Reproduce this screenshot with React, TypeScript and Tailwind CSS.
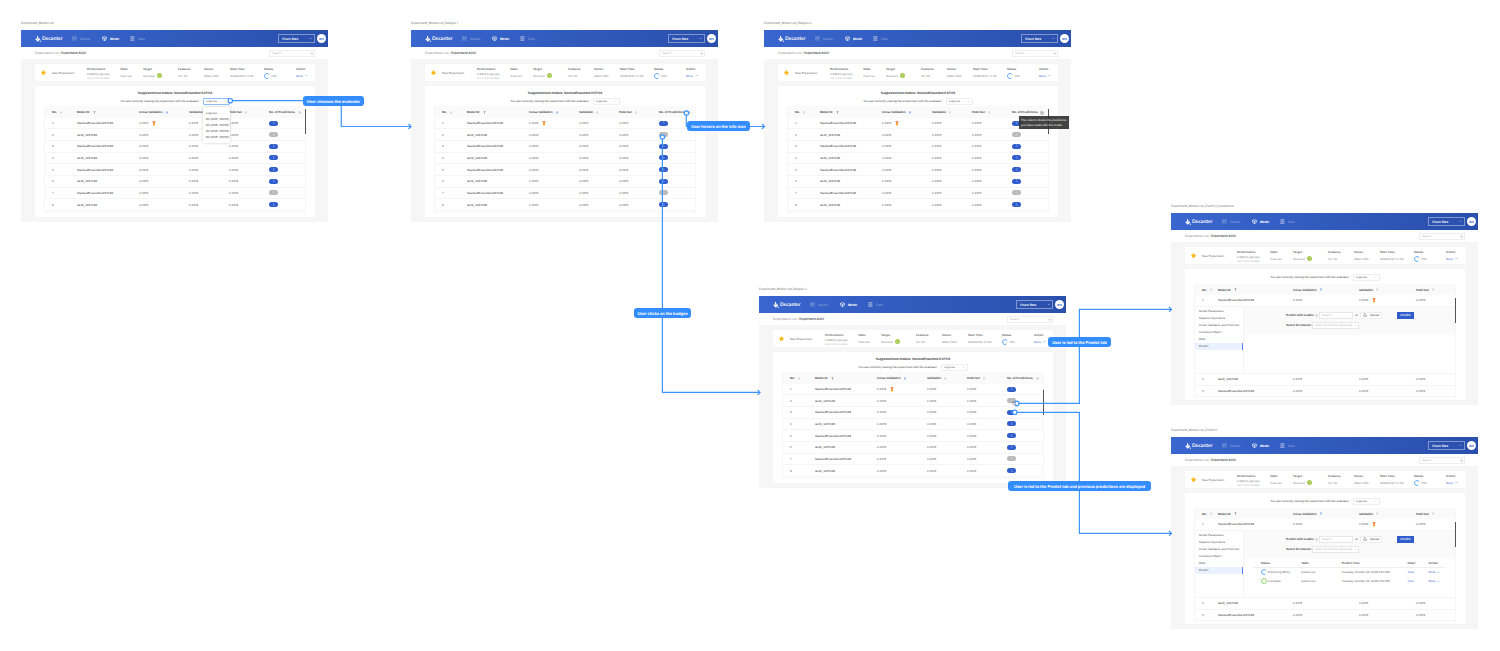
import React, { useId } from "react";
import { Box, ChevronDown, Info, Search, Upload } from "lucide-react";

const ROWS = [1, 2, 3, 4, 5, 6, 7, 8];
const modelName = (n: number) => (n % 2 === 1 ? "StackedEnsemble1237128" : "GLM_1237128");

function Logo() {
  return (
    <svg viewBox="0 0 24 24" className="h-[6px] w-[6px]" fill="none" aria-hidden="true">
      <path d="M8 0h4v5l9 8-9.500 10L1 13l7-6z" fill="#fff" />
      <path d="M5 11.500c4-2 7 2 11-.5" stroke="#3560c6" strokeWidth="1.800" />
      <circle cx="21.500" cy="20.500" r="2.500" fill="#fff" />
    </svg>
  );
}

function BuilderIcon() {
  return (
    <svg viewBox="0 0 20 20" className="h-[5px] w-[5px]" fill="none" stroke="currentColor" strokeWidth="2" aria-hidden="true">
      <path d="M2 19V7h5v12M7 12l5-6M12 19V5h5v14" />
      <circle cx="4.500" cy="4" r="2" />
      <circle cx="14.500" cy="2.500" r="1.800" />
    </svg>
  );
}

function DataIcon() {
  return (
    <svg viewBox="0 0 20 20" className="h-[5px] w-[5px]" fill="currentColor" aria-hidden="true">
      <rect x="1" y="0" width="17" height="6" rx="2" />
      <rect x="1" y="7" width="17" height="6" rx="2" />
      <rect x="1" y="14" width="17" height="6" rx="2" />
    </svg>
  );
}

function SortMark({ tone }: { tone: string }) {
  return (
    <svg viewBox="0 0 6 8" className={`h-[3px] w-[2px] ${tone}`} aria-hidden="true">
      <path d="M0 3.500 3 0l3 3.500H4V8H2V3.500z" fill="currentColor" />
    </svg>
  );
}

function FilterMark() {
  return (
    <svg viewBox="0 0 8 8" className="h-[3px] w-[3px] text-[#aaa]" aria-hidden="true">
      <path d="M1 0h6L5 4v4H3V4z" fill="currentColor" />
    </svg>
  );
}

function Medal() {
  return (
    <svg viewBox="0 0 12 16" className="h-[5px] w-[4px]" aria-hidden="true">
      <path d="M1 0h10L8.500 9h-5z" fill="#e8694c" />
      <path d="M4.500 0h3v8h-3z" fill="#f9c66a" />
      <circle cx="6" cy="11.500" r="3.500" fill="#f5a623" />
    </svg>
  );
}

function Star() {
  return (
    <svg viewBox="0 0 24 24" className="h-[5px] w-[5px]" aria-hidden="true">
      <path
        d="M12 1l3.800 6.800 7.600 1.500-5.200 5.700 1 7.700L12 19.500l-7.200 3.200 1-7.700L.6 9.300l7.600-1.500z"
        fill="#fbb713"
        stroke="#fbb713"
        strokeWidth="1.500"
      />
    </svg>
  );
}

function Ring({ done = false }: { done?: boolean }) {
  return (
    <svg viewBox="0 0 24 24" className="h-[6px] w-[6px] shrink-0" fill="none" aria-hidden="true">
      {done ? (
        <circle cx="12" cy="12" r="10" stroke="#86d35a" strokeWidth="3.500" />
      ) : (
        <>
          <circle cx="12" cy="12" r="10" stroke="#e3f0ff" strokeWidth="3" />
          <path d="M16 21.200A10 10 0 1 1 20 6" stroke="#4a9cf8" strokeWidth="3.500" />
        </>
      )}
    </svg>
  );
}

function Hand() {
  return (
    <svg viewBox="0 0 16 16" className="h-[4px] w-[4px]" aria-hidden="true">
      <path
        d="M4 1h2.500v6l6.500 1.500V12l-2 3.500H6L1.500 9 3 8l1 1.500z"
        fill="#fff"
        stroke="#555"
        strokeWidth="1.500"
      />
    </svg>
  );
}

function More() {
  return (
    <a href="#more" className="flex items-center gap-[2px] text-[#3a68d8]">
      More <ChevronDown className="h-[3px] w-[3px]" strokeWidth={3} />
    </a>
  );
}

function TopBar() {
  return (
    <header className="flex h-[17px] items-center bg-linear-to-r from-[#3966cf] to-[#2a4fac] pr-[2px] pl-[14px] text-white">
      <a href="#home" className="flex w-[37px] items-center gap-px font-[Lato] text-[5px] leading-[6px] font-bold">
        <Logo />
        Decanter
      </a>
      <nav className="flex flex-1 font-[Inter] text-[3px] leading-[4px] font-medium">
        <a href="#builder" className="flex w-[30px] items-center gap-[3px] text-white/40">
          <BuilderIcon />
          Builder
        </a>
        <a href="#model" className="flex w-[28px] items-center gap-[3px] font-bold">
          <Box className="h-[5px] w-[5px]" strokeWidth={3} />
          Model
        </a>
        <a href="#data" className="flex items-center gap-[3px] text-white/40">
          <DataIcon />
          Data
        </a>
      </nav>
      <div className="relative">
        <select
          aria-label="Project"
          className="block h-[9px] w-[37px] appearance-none border border-white/40 pl-[3px] font-[Inter] text-[3px] leading-[4px] font-semibold [text-rendering:inherit]"
        >
          <option>Churn Rate</option>
        </select>
        <ChevronDown className="pointer-events-none absolute top-[3px] right-[3px] h-[3px] w-[3px]" strokeWidth={3} />
      </div>
      <span className="ml-[2px] flex h-[9px] w-[9px] items-center justify-center rounded-full bg-white text-[3px] leading-[4px] font-bold text-[#3463cc]">
        WS
      </span>
    </header>
  );
}

function Crumbs() {
  return (
    <div className="flex h-[12px] items-center justify-between bg-white pr-[13px] pl-[14px]">
      <nav className="font-[Inter] text-[#888]">
        <a href="#experiments">Experiments List</a> / <span className="font-semibold text-[#444]">Experiment A001</span>
      </nav>
      <div className="relative">
        <input
          aria-label="Search experiments"
          placeholder="Search"
          className="block h-[7px] w-[46px] border border-[#eee] pl-[2px] text-[3px] leading-[4px] [text-rendering:inherit] placeholder:text-[#bbb]"
        />
        <Search className="pointer-events-none absolute top-[2px] right-[2px] h-[3px] w-[3px] text-[#999]" />
      </div>
    </div>
  );
}

function Fact({ name, children }: { name: string; children: React.ReactNode }) {
  return (
    <div className="flex min-w-0 flex-col gap-[2px] pt-[3px]">
      <dt className="font-bold text-[#666]">{name}</dt>
      <dd className="flex h-[5px] items-center text-[#888]">{children}</dd>
    </div>
  );
}

function Summary() {
  return (
    <dl className="grid h-[17px] grid-cols-[6fr_11fr_35fr_33fr_23fr_35fr_26fr_26fr_34fr_32fr_19fr] whitespace-nowrap bg-white">
      <div />
      <div className="flex min-w-0 items-center"><Star /></div>
      <dt className="flex min-w-0 items-center text-[#666]">New Experiment</dt>
      <div className="min-w-0 pt-[3px]">
        <dt className="font-bold text-[#666]">Performance</dt>
        <dd className="pt-px text-[#888]">0.9301(LogLoss)</dd>
        <dd className="text-[#bbb]">out of 10 models</dd>
      </div>
      <Fact name="Table">Train.csv</Fact>
      <Fact name="Target">
        Survived
        <svg viewBox="0 0 20 20" className="ml-[2px] h-[5px] w-[5px]" aria-hidden="true">
          <circle cx="10" cy="10" r="10" fill="#a9cb55" />
          <path d="M5.500 10.500l3 3 6-6.500" fill="none" stroke="#d9ecae" strokeWidth="2" />
        </svg>
      </Fact>
      <Fact name="Features">16 / 31</Fact>
      <Fact name="Owner">Albert Shih</Fact>
      <Fact name="Start Time">2018/12/21 17:30</Fact>
      <Fact name="Status">
        <Ring />
        <span className="ml-px">70%</span>
      </Fact>
      <Fact name="Action"><More /></Fact>
    </dl>
  );
}

function Evaluator({ open = false }: { open?: boolean }) {
  const id = useId();
  return (
    <div className="flex h-[6px] items-center justify-center gap-[3px] whitespace-nowrap text-[#444]">
      <label htmlFor={id}>You are currently viewing the experiment with the evaluator:</label>
      <div className="relative">
        <select
          id={id}
          className={`block h-[7px] w-[27px] appearance-none rounded-[1px] border pl-[2px] text-[3px] leading-[4px] text-[#666] [text-rendering:inherit] ${
            open ? "border-[#8cc0fb]" : "border-[#eee]"
          }`}
        >
          <option>LogLoss</option>
        </select>
        <ChevronDown className="pointer-events-none absolute top-[2px] right-[3px] h-[3px] w-[3px] text-[#888]" />
        {open && (
          <ul className="absolute top-[9px] left-0 z-10 flex w-[27px] flex-col gap-[2px] rounded-[1px] bg-white pt-[4px] pb-[4px] pl-[3px] text-[#555] shadow-[0_0_3px_rgba(0,0,0,0.2)]">
            <li>LogLoss</li>
            <li>R2 (MSE, RMSE)</li>
            <li>R2 (MSE, RMSE)</li>
            <li>R2 (MSE, RMSE)</li>
            <li>R2 (MSE, RMSE)</li>
          </ul>
        )}
      </div>
    </div>
  );
}

function Head({ children, mark }: { children: React.ReactNode; mark: React.ReactNode }) {
  return (
    <th className="p-0 text-left font-bold text-[#444]">
      <span className="flex items-center gap-[3px] whitespace-nowrap">
        {children}
        {mark}
      </span>
    </th>
  );
}

function Scrollbar({ at }: { at: string }) {
  return <span className={`absolute -right-px h-[25px] w-px bg-[#555] ${at}`} />;
}

const grayMark = <SortMark tone="text-[#bbb]" />;

function ModelTable({ bar, tip = false }: { bar?: string; tip?: boolean }) {
  return (
    <div className="relative border-x border-b border-[#f6f6f6] pb-px">
      <table className="h-[105px] w-full table-fixed">
        <colgroup>
          <col className="w-[7px]" />
          <col className="w-[25px]" />
          <col className="w-[62px]" />
          <col className="w-[50px]" />
          <col className="w-[40px]" />
          <col className="w-[40px]" />
          <col />
        </colgroup>
        <thead>
          <tr className="h-[12px] bg-[#fafafa]">
            <td className="p-0" />
            <Head mark={grayMark}>No.</Head>
            <Head mark={<FilterMark />}>Model ID</Head>
            <Head mark={<SortMark tone="text-[#4a7de8]" />}>Cross Validation</Head>
            <Head mark={grayMark}>Validation</Head>
            <Head mark={grayMark}>Hold Out</Head>
            <Head mark={<Info className="h-[3px] w-[3px] text-[#999]" />}>No. of Predictions</Head>
          </tr>
        </thead>
        <tbody>
          {ROWS.map((n) => (
            <tr key={n} className="border-b border-[#f5f5f5] text-[#666]">
              <td className="p-0" />
              <td className="p-0">{n}</td>
              <td className="p-0 text-[#333]">{modelName(n)}</td>
              <td className="p-0">
                <span className="flex items-center gap-[4px]">0.4378 {n === 1 && <Medal />}</span>
              </td>
              <td className="p-0">0.4378</td>
              <td className="p-0">0.4378</td>
              <td className="p-0">
                <button
                  className={`flex h-[5px] w-[9px] items-center justify-center rounded-full text-[3px] leading-[4px] text-white/60 ${
                    n === 2 || n === 7 ? "bg-[#b9b9b9]" : "bg-[#2f5dcb]"
                  }`}
                >
                  {n === 2 || n === 7 ? 0 : 5}
                </button>
              </td>
            </tr>
          ))}
        </tbody>
      </table>
      {bar && <Scrollbar at={bar} />}
      {tip && (
        <div
          role="tooltip"
          className="absolute top-[10px] -right-[21px] w-[50px] bg-[#2f2f2f]/90 px-[2px] pt-[2px] pb-px leading-[5px] whitespace-nowrap text-white/90"
        >
          The column shows the predictions
          <br />
          you have made with the model.
          <span className="absolute -top-[5px] left-[21px]"><Hand /></span>
        </div>
      )}
    </div>
  );
}

const TABS = ["Model Parameters", "Feature Importance", "Cross Validation and Hold Out", "Confusion Matrix", "ROC", "Predict"];

function PredictForm() {
  const id = useId();
  return (
    <form className="flex h-[28px] flex-col gap-[3px] bg-[#fafafa] pt-[5px] pl-[42px] whitespace-nowrap text-[#444]">
      <div className="flex h-[7px] items-center">
        <label htmlFor={id + "t"} className="flex w-[33px] items-center gap-px font-bold">
          Predict with a table: <Info className="h-[3px] w-[3px] text-[#999]" />
        </label>
        <input
          id={id + "t"}
          placeholder="Search"
          className="block h-[7px] w-[34px] border border-[#e8e8e8] bg-white pl-[2px] text-[3px] leading-[4px] [text-rendering:inherit] placeholder:text-[#bbb]"
        />
        <span className="w-[7px] text-center">or</span>
        <button
          type="button"
          className="flex h-[7px] w-[22px] items-center justify-center gap-[3px] border border-[#eee] bg-white text-[3px] leading-[4px] [text-rendering:inherit]"
        >
          <Upload className="h-[4px] w-[4px]" /> Upload
        </button>
        <button
          type="button"
          className="ml-[15px] h-[7px] w-[17px] bg-[#2f5dcb] text-[3px] leading-[4px] font-bold text-white/90 [text-rendering:inherit]"
        >
          Predict
        </button>
      </div>
      <div className="flex h-[7px] items-center">
        <label htmlFor={id + "c"} className="w-[26px] font-bold">Select ID Column:</label>
        <div className="relative">
          <select
            id={id + "c"}
            className="block h-[7px] w-[47px] appearance-none border border-[#e8e8e8] bg-white pl-[2px] text-[3px] leading-[4px] text-[#bbb] [text-rendering:inherit]"
          >
            <option>Select ID Column (Optional)</option>
          </select>
          <ChevronDown className="pointer-events-none absolute top-[2px] right-[2px] h-[3px] w-[3px] text-[#888]" />
        </div>
      </div>
    </form>
  );
}

function Predictions() {
  return (
    <table className="mt-px ml-[9px] w-[193px] table-fixed whitespace-nowrap text-[#666]">
      <colgroup>
        <col className="w-[4%]" />
        <col className="w-[21%]" />
        <col className="w-[21%]" />
        <col className="w-[34%]" />
        <col className="w-[11%]" />
        <col className="w-[9%]" />
      </colgroup>
      <thead>
        <tr className="h-[8px] border-b border-[#eee] text-left text-[#555]">
          <td className="p-0" />
          <th className="p-0">Status</th>
          <th className="p-0">Table</th>
          <th className="p-0">Predict Time</th>
          <th className="p-0">Chart</th>
          <th className="p-0">Action</th>
        </tr>
      </thead>
      <tbody>
        {["Predicting (80%)", "Complete"].map((status, i) => (
          <tr key={status} className="h-[9px]">
            <td className="p-0" />
            <td className="p-0">
              <span className="flex items-center gap-px"><Ring done={i === 1} />{status}</span>
            </td>
            <td className="p-0">predict.csv</td>
            <td className="p-0">Tuesday, October 23, 2018 2:50 PM</td>
            <td className="p-0"><a href="#view" className="text-[#3a68d8]">View</a></td>
            <td className="p-0"><More /></td>
          </tr>
        ))}
      </tbody>
    </table>
  );
}

function PredictTable({ results }: { results: boolean }) {
  const row = (n: number) => (
    <tr key={n} className={`border-b border-[#f5f5f5] text-[#666] ${n === 2 ? "h-[12px]" : "h-[11px]"}`}>
      <td className="p-0" />
      <td className="p-0">{n}</td>
      <td className="p-0 text-[#333]">{modelName(n)}</td>
      <td className="p-0">0.4378</td>
      <td className="p-0">
        <span className="flex items-center gap-[4px]">0.4378 {n === 1 && <Medal />}</span>
      </td>
      <td className="p-0">0.4378</td>
    </tr>
  );
  return (
    <div className="relative border-x border-[#f6f6f6]">
      <table className="w-full table-fixed">
        <colgroup>
          <col className="w-[7px]" />
          <col className="w-[16px]" />
          <col className="w-[75px]" />
          <col className="w-[66px]" />
          <col className="w-[57px]" />
          <col />
        </colgroup>
        <thead>
          <tr className="h-[11px] bg-[#fafafa]">
            <td className="p-0" />
            <Head mark={grayMark}>No.</Head>
            <Head mark={<FilterMark />}>Model ID</Head>
            <Head mark={<SortMark tone="text-[#4a7de8]" />}>Cross Validation</Head>
            <Head mark={grayMark}>Validation</Head>
            <Head mark={grayMark}>Hold Out</Head>
          </tr>
        </thead>
        <tbody>
          {row(1)}
          <tr className="border-b border-[#f5f5f5]">
            <td colSpan={6} className="p-0">
              <div className="flex h-[66px]">
                <nav className="flex w-[49px] flex-col border-r border-[#f3f3f3] pt-px whitespace-nowrap text-[#555]">
                  {TABS.map((tab) => (
                    <a
                      key={tab}
                      href="#tab"
                      className={`flex h-[7px] items-center pl-[4px] ${
                        tab === "Predict" ? "border-r border-[#5b86e5] bg-[#e9f2fe]" : ""
                      }`}
                    >
                      {tab}
                    </a>
                  ))}
                </nav>
                <div className="min-w-0 flex-1">
                  <PredictForm />
                  {results && <Predictions />}
                </div>
              </div>
            </td>
          </tr>
          {row(2)}
          {row(3)}
        </tbody>
      </table>
      <Scrollbar at="top-[14px]" />
    </div>
  );
}

function Frame({ title, place, children }: { title: string; place: string; children: React.ReactNode }) {
  return (
    <section className={`absolute w-[307px] ${place}`}>
      <h2 className="h-[9px] font-[Inter] font-medium whitespace-nowrap text-[#888]">{title}</h2>
      <TopBar />
      <Crumbs />
      <div className="flex flex-col gap-[5px] bg-[#f6f6f6] pt-[5px] pr-[13px] pb-[5px] pl-[14px]">
        <Summary />
        <div className="h-[131px] bg-white px-[9px] pt-[5px]">{children}</div>
      </div>
    </section>
  );
}

function ListFrame({ title, place, open, bar, tip }: { title: string; place: string; open?: boolean; bar?: string; tip?: boolean }) {
  return (
    <Frame title={title} place={place}>
      <h3 className="mb-[2px] text-center font-[Inter] leading-[5px] font-bold text-[#444]">
        Suggested best models: StackedEnsemble1237128
      </h3>
      <Evaluator open={open} />
      <div className="mt-[2px]"><ModelTable bar={bar} tip={tip} /></div>
    </Frame>
  );
}

function PredictFrame({ title, place, results = false }: { title: string; place: string; results?: boolean }) {
  return (
    <Frame title={title} place={place}>
      <Evaluator />
      <div className="mt-[4px]"><PredictTable results={results} /></div>
    </Frame>
  );
}

function Connectors() {
  return (
    <svg className="pointer-events-none absolute top-0 left-0 h-[651px] w-[1500px]" fill="none" stroke="#3d94ff" strokeWidth="1.200" aria-hidden="true">
      <path d="M230 100.700H341.300V126.500H411M408.500 124l2.500 2.500-2.500 2.500" />
      <path d="M686.300 113V126.500H764.500M762 124l2.500 2.500-2.500 2.500" />
      <path d="M662.400 137V392.400H760M757.500 389.900l2.500 2.500-2.500 2.500" />
      <path d="M1016.700 403.400H1079.400V309.400H1171.500M1169 306.900l2.500 2.500-2.500 2.500" />
      <path d="M1014.700 412.400H1079.400V533.400H1171.500M1169 530.900l2.500 2.500-2.500 2.500" />
      <g fill="#fff">
        <circle cx="230.300" cy="100.700" r="2.200" />
        <circle cx="686.400" cy="113" r="2.200" />
        <circle cx="662.400" cy="137" r="2.200" />
        <circle cx="1016.800" cy="403.400" r="2.200" />
        <circle cx="1014.800" cy="412.300" r="2.200" />
      </g>
    </svg>
  );
}

function Note({ place, children }: { place: string; children: React.ReactNode }) {
  return (
    <p
      className={`absolute flex h-[10px] items-center justify-center rounded-[3px] bg-[#338dff] font-[Inter] text-[4px] leading-[5px] font-bold whitespace-nowrap text-white ${place}`}
    >
      {children}
    </p>
  );
}

export default function App() {
  return (
    <main className="relative min-h-screen w-full overflow-hidden bg-white font-['Liberation_Sans',sans-serif] text-[3px] leading-[4px] [text-rendering:geometricPrecision]">
      <ListFrame title="Experiment_Model List" place="top-[21px] left-[21px]" open bar="top-[3px]" />
      <ListFrame title="Experiment_Model List_Badges 1" place="top-[21px] left-[411px]" />
      <ListFrame title="Experiment_Model List_Badges 2" place="top-[21px] left-[764px]" bar="top-[3px]" tip />
      <ListFrame title="Experiment_Model List_Badges 3" place="top-[287px] left-[759px]" bar="top-[18px]" />
      <PredictFrame title="Experiment_Model List_Predict_0 prediction" place="top-[204px] left-[1171px]" />
      <PredictFrame title="Experiment_Model List_Predict 1" place="top-[428px] left-[1171px]" results />
      <Connectors />
      <span className="absolute top-[401px] left-[1012px]"><Hand /></span>
      <Note place="top-[96px] left-[303px] w-[61px]">User chooses the evaluator</Note>
      <Note place="top-[121px] left-[687px] w-[63px]">User hovers on the info icon</Note>
      <Note place="top-[308px] left-[634px] w-[57px]">User clicks on the badges</Note>
      <Note place="top-[337px] left-[1048px] w-[63px]">User is led to the Predict tab</Note>
      <Note place="top-[481px] left-[1008px] w-[143px]">
        User is led to the Predict tab and previous predictions are displayed
      </Note>
    </main>
  );
}
